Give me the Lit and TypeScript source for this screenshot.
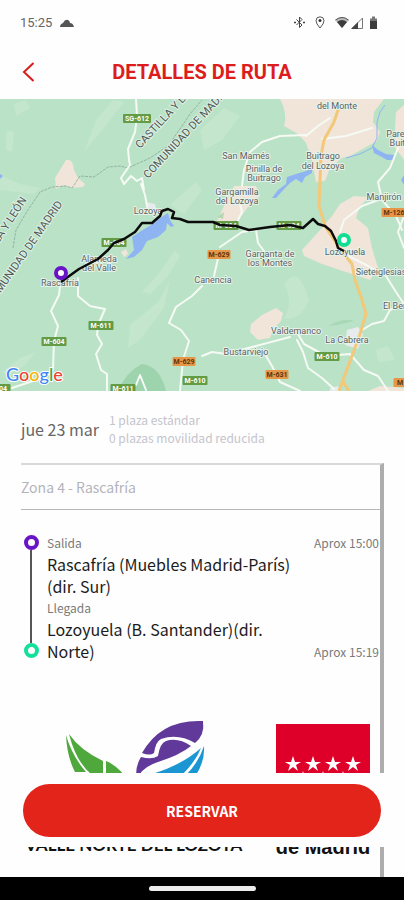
import { LitElement, html, css, svg } from "lit";
import { customElement } from "lit/decorators.js";

interface Label { x: number; y: number; text: string; }
interface Shield extends Label { kind: "green" | "orange"; w: number; }

const places: Label[] = [
  { x: 337, y: 109, text: "del Monte" },
  { x: 246, y: 159, text: "San Mamés" },
  { x: 264, y: 172, text: "Pinilla de" },
  { x: 264, y: 181, text: "Buitrago" },
  { x: 323, y: 159, text: "Buitrago" },
  { x: 323, y: 169, text: "del Lozoya" },
  { x: 237, y: 195, text: "Gargamilla" },
  { x: 237, y: 204, text: "del Lozoya" },
  { x: 384, y: 200, text: "Manjirón" },
  { x: 398, y: 137, text: "Pared" },
  { x: 399, y: 146, text: "Buitr" },
  { x: 148, y: 214, text: "Lozoya" },
  { x: 99, y: 262, text: "Alameda" },
  { x: 99, y: 271, text: "del Valle" },
  { x: 60, y: 286, text: "Rascafría" },
  { x: 270, y: 257, text: "Garganta de" },
  { x: 270, y: 266, text: "los Montes" },
  { x: 213, y: 283, text: "Canencia" },
  { x: 345, y: 255, text: "Lozoyuela" },
  { x: 381, y: 275, text: "Sieteiglesias" },
  { x: 396, y: 309, text: "El Berr" },
  { x: 296, y: 334, text: "Valdemanco" },
  { x: 347, y: 343, text: "La Cabrera" },
  { x: 246, y: 355, text: "Bustarviejo" },
];

const shields: Shield[] = [
  { x: 137, y: 118, w: 28, text: "SG-612", kind: "green" },
  { x: 114, y: 242, w: 25, text: "M-604", kind: "green" },
  { x: 226, y: 225, w: 25, text: "M-604", kind: "green" },
  { x: 289, y: 225, w: 25, text: "M-634", kind: "green" },
  { x: 101, y: 325, w: 25, text: "M-611", kind: "green" },
  { x: 54, y: 341, w: 25, text: "M-604", kind: "green" },
  { x: 3, y: 388, w: 15, text: "04", kind: "green" },
  { x: 123, y: 388, w: 25, text: "M-611", kind: "green" },
  { x: 195, y: 380, w: 25, text: "M-610", kind: "green" },
  { x: 327, y: 356, w: 25, text: "M-610", kind: "green" },
  { x: 219, y: 254, w: 23, text: "M-629", kind: "orange" },
  { x: 184, y: 361, w: 23, text: "M-629", kind: "orange" },
  { x: 277, y: 374, w: 23, text: "M-631", kind: "orange" },
  { x: 394, y: 212, w: 25, text: "M-126", kind: "orange" },
  { x: 400, y: 382, w: 13, text: "M", kind: "orange" },
];

@customElement("route-map")
class RouteMap extends LitElement {
  static styles = css`
    :host { display: block; }
    svg { display: block; width: 100%; height: auto; }
    .place { font: 9px Roboto, sans-serif; fill: #5c6262; text-anchor: middle; paint-order: stroke; stroke: #e6f3ea; stroke-width: 2px; stroke-linejoin: round; }
    .region { font: 11px Roboto, sans-serif; fill: #4f5a56; paint-order: stroke; stroke: #dff1e5; stroke-width: 2px; }
    .region.to-end { text-anchor: end; }
    .shield { font: 700 7px Roboto, sans-serif; fill: #fff; text-anchor: middle; }
    .shield.orange { fill: #5b3510; }
    .brand { font: 500 18px Lato, sans-serif; paint-order: stroke; stroke: #fff; stroke-width: 2px; }
    .road { fill: none; stroke: #f5faf4; stroke-width: 2px; stroke-linejoin: round; stroke-linecap: round; }
    .border { fill: none; stroke: #93b5a2; stroke-width: 1px; stroke-dasharray: 3 1; }
    .land { fill: #f0e5d8; }
    .shade { fill: #c3e6cd; }
    .water { fill: #8fb4f2; }
    .stream { fill: none; stroke: #8fb4f2; }
  `;

  render() {
    return html`
      <svg viewBox="0 99 404 292" role="img" aria-label="Mapa de la ruta">
        <rect x="0" y="99" width="404" height="292" fill="#bae2c7" />
        <g class="shade">
          <path d="M96 120 L113 100 L124 102 L104 128 L84 152 Z" />
          <path d="M0 175 L20 184 L40 188 L34 194 L0 190 Z" />
          <path d="M14 104 L26 100 L30 108 L16 116 Z M7 130 L14 132 L12 152 L6 150 Z" />
          <path d="M175 250 L160 272 L142 292 L150 294 L168 276 L180 256 Z" />
          <path d="M130 325 L158 302 L170 280 L164 308 L140 340 L128 348 Z" />
          <path d="M2 372 L20 358 L36 352 L24 366 L8 376 Z" />
          <path d="M284 285 Q298 262 309 300 Q300 322 284 318 Q294 300 284 285 Z" />
          <path d="M200 130 L224 108 L240 116 L222 140 L204 150 Z" />
          <path d="M376 350 L388 346 L395 360 L378 362 Z" />
          <path d="M170 205 L196 182 L202 190 L184 214 Z" />
        </g>
        <path fill="#9dd3ad" d="M118 391 Q126 372 142 364 Q160 366 166 391 Z" />
        <path fill="#a9d8b6" d="M328 326 Q344 317 354 321 L338 325 Z M268 320 L276 308 L282 313 L274 322 Z" />
        <g class="land">
          <path d="M66 160 Q73 158 74 170 L78 178 L85 184 L83 187 L70 188 L64 185 L56 189 L55 178 Z" />
          <path d="M280 99 H384 L374 112 L373 122 L380 132 L377 141 L350 156 L342 158 L330 168 L325 181 L316 182 L312 160 L306 143 L298 134 L284 126 Q288 114 280 99 Z" />
          <path d="M234 186 L256 186 L260 196 L248 207 L240 218 L230 223 L217 221 L222 210 Z" />
          <path d="M302 250 L320 230 L332 216 L340 204 L354 196 L370 197 L360 206 L356 218 L368 228 L372 248 L378 268 L370 280 L352 274 L322 264 L304 256 Z" />
          <path d="M276 308 L283 313 L281 321 L274 328 L270 338 L258 340 L250 332 L251 324 L262 315 Z" />
          <path d="M368 391 L380 386 L404 388 V391 Z M396 112 L404 105 V160 L394 146 Z" />
          <path d="M121 252 L126 249 L128 254 L124 257 Z" />
        </g>
        <path fill="#e8ebee" d="M347 330 L358 327 L363 334 L358 349 L345 345 Z M146 202 L155 204 L157 212 L146 214 Z M330 388 L338 386 L340 391 H330 Z" />
        <path fill="#b6d6b4" d="M217 217 L224 212 L223 219 Z" />
        <g class="water">
          <path d="M132 237 L141 231 L151 225 L160 218 L168 213 L170 220 L174 226 L171 227 L167 223 L166 230 L158 237 L147 241 L142 250 L134 257 L126 259 L134 250 Z" />
          <path d="M278 190 L286 184 L287 177 L296 174 L306 171 L312 168 L312 173 L305 177 L302 183 L296 179 L290 183 L285 188 L276 198 L272 198 Z" />
          <path d="M372 145 L378 150 L386 154 L394 155 L393 160 L387 160 L382 157 L374 153 Z" />
          <path d="M0 174 L3 176 L0 179 Z M404 175 L401 180 L404 185 Z" />
        </g>
        <path class="stream" d="M346 158 L360 154 L372 148 L377 138 L377 122 L380 112 L385 105" />
        <g class="border">
          <path d="M13 248 L16 230 L26 213 L40 192 L52 187 L66 186 L72 188 L80 176 L94 177 L108 167 L120 166 L128 168 L150 158 L168 146 L182 126 L190 114 L202 100" />
        </g>
        <g class="road">
          <path d="M136 99 L137 116 L135 132 L128 149 L129 160 L130 165 L121 178 L124 184 L131 176 L137 181 L142 178 L144 190 L141 184 L145 195 L147 206" />
          <path d="M60 286 L59 295 L51 311 L58 326 L54 341 L53 370 L46 376 L30 382 L12 388" />
          <path d="M78 278 L78 296 L90 306 L105 309 L98 325 L97 335 L102 344 L96 354 L101 370 L107 374 L107 391" />
          <path d="M202 286 L192 296 L176 307 L169 323 L181 330 L189 341 L183 360 L180 391" />
          <path d="M136 385 L140 375 L146 390" />
          <path d="M202 356 L212 352 L226 354 L252 347 L290 337 M298 334 L304 344 L326 356 L350 354 L364 370 L378 376 L388 391" />
          <path d="M297 340 L303 352 L308 368 L322 378 L334 389 M266 356 L272 366 L280 382 L300 391" />
          <path d="M362 330 L372 324 L384 321 L390 310 L404 304" />
          <path d="M345 254 L368 266 L386 276 L396 292 L404 304" />
          <path d="M242 186 L244 170 L250 152 L262 142 L280 136 L306 135 M306 136 L318 126 L330 118 M322 139 L346 136 L372 128" />
          <path d="M398 148 L390 168 L378 182 L382 200 L396 216 L402 230 M384 198 L362 206 L344 220 L340 232" />
          <path d="M219 254 L214 276 M220 247 L242 232 L256 230 L258 243 L264 251 M404 216 L398 232 L404 248" />
          <path d="M236 224 L242 212 L240 204" />
        </g>
        <path d="M340 104 L334 122 L324 140 L321 156 L320 180 L319 206 L325 226 L340 249 L352 264 L355 280 L362 300 L366 314 L360 334 L352 356 L343 380 L339 391 M342 380 L349 391" fill="none" stroke="#f3c878" stroke-width="3" stroke-linejoin="round" />
        ${shields.map((s) => svg`
          <rect x=${s.x - s.w / 2} y=${s.y - 4} width=${s.w} height="9" rx="1" fill=${s.kind === "green" ? "#649b45" : "#e69646"} />
          <text class="shield ${s.kind}" x=${s.x} y=${s.y + 3}>${s.text}</text>`)}
        ${places.map((p) => svg`<text class="place" x=${p.x} y=${p.y}>${p.text}</text>`)}
        <text class="region" transform="translate(140 149) rotate(-47)">CASTILLA Y LEÓN</text>
        <text class="region" transform="translate(148 179) rotate(-47)">COMUNIDAD DE MADRID</text>
        <text class="region to-end" transform="translate(27 200) rotate(-57)">CASTILLA Y LEÓN</text>
        <text class="region to-end" transform="translate(63 204) rotate(-55)">COMUNIDAD DE MADRID</text>
        <path d="M61 282 L72 274 L79 269 L98 259 L108 250 L114 243 L124 239 L135 232 L142 223 L152 223 L160 216 L162 211 L168 209 L174 212 L172 218 L180 219 L188 222 L213 222 L220 225 L236 226 L249 230 L270 227 L290 225 L303 228 L313 219 L318 224 L325 226 L331 231 L336 241 L338 248 L344 251" fill="none" stroke="#0c0c0c" stroke-width="2.500" stroke-linejoin="round" />
        <circle cx="61" cy="273" r="5" fill="#fff" stroke="#6a14c8" stroke-width="4" />
        <circle cx="344" cy="240" r="5" fill="#fff" stroke="#12dd94" stroke-width="4" />
        <text class="brand" x="6" y="381"><tspan fill="#4285f4">G</tspan><tspan fill="#ea4335">o</tspan><tspan fill="#f5b400">o</tspan><tspan fill="#4285f4">g</tspan><tspan fill="#34a853">l</tspan><tspan fill="#ea4335">e</tspan></text>
      </svg>
    `;
  }
}

@customElement("app-root")
class AppRoot extends LitElement {
  static styles = css`
    * { box-sizing: border-box; }
    :host {
      display: flex; flex-direction: column; min-height: 100vh; background: #fefefe; color: #1c1c1c;
      font-family: "Noto Sans CJK SC", "Noto Sans", sans-serif;
    }
    .status { display: flex; align-items: center; height: 45px; padding: 0 26px 0 20px; font: 13px/16px Roboto, sans-serif; color: #666; }
    .status .cloud { margin-left: 8px; }
    .status .right { display: flex; align-items: center; margin-left: auto; }
    .status .right svg { display: block; }
    .bt, .pin { margin-right: 10px; }
    .header { display: grid; grid-template-columns: 56px 1fr 56px; align-items: center; height: 54px; }
    .back { height: 44px; margin: 0; padding: 0 0 0 22px; border: 0; background: none; }
    .back svg { display: block; }
    h1 { margin: 0; font: 700 20px/24px Roboto, sans-serif; color: #dd1c1c; text-align: center; }
    main { flex: 1; display: flex; flex-direction: column; position: relative; overflow: hidden; }
    .summary { display: flex; align-items: center; gap: 10px; height: 72px; padding: 3px 21px 0; }
    .date { font-size: 16px; line-height: 24px; color: #666; }
    .seats { font-size: 12px; line-height: 18px; color: #c4c4cc; }
    .card { flex: 1; display: flex; flex-direction: column; margin: 0 20px 0 21px; border-top: 2px solid #d9d9d9; border-right: 4px solid #adadad; }
    .zone { margin: 0; height: 45px; border-bottom: 1px solid #b4b6ba; font-size: 14px; font-weight: 400; line-height: 44px; color: #b4b4bc; }
    .trip { display: grid; grid-template-columns: 20px 1fr auto; column-gap: 6px; padding: 22px 1px 0 0; }
    .rail { display: flex; flex-direction: column; align-items: center; padding: 3px 0 4px; }
    .ring { width: 15px; height: 15px; border: 4px solid #6a14c8; border-radius: 50%; }
    .ring.end { border-color: #14e09a; }
    .line { flex: 1; width: 2px; background: #555; }
    .stops, .times { font-size: 12px; line-height: 21px; color: #7a7a7a; }
    .stops p { margin: 0; }
    .stops .stop { font-size: 16px; line-height: 22px; color: #1c1c1c; }
    .times { display: flex; flex-direction: column; justify-content: space-between; padding-left: 6px; }
    .logos { display: flex; justify-content: space-between; align-items: flex-start; margin-top: 57px; padding: 0 9px 0 4px; color: #111; }
    .logo { display: flex; flex-direction: column; align-items: center; margin: 0; }
    .logo svg { display: block; }
    .valle { font: 700 17px/20px Lato, sans-serif; }
    .madrid { font: 700 20px/20px "Liberation Sans", sans-serif; }
    .action { position: absolute; left: 0; right: 0; bottom: 30px; padding: 11px 23px 10px; background: #fefefe; }
    .reserve { display: block; width: 100%; height: 53px; padding: 0; border: 0; border-radius: 27px; background: #e3241b; color: #fff; font: 700 14px/20px "Noto Sans CJK SC", sans-serif; }
    .nav { display: flex; justify-content: center; height: 23px; padding-top: 9px; background: #000; }
    .handle { width: 107px; height: 5px; border-radius: 3px; background: #ececec; }
  `;

  render() {
    return html`
      <div class="status">
        <span>15:25</span>
        <svg class="cloud" width="14" height="10" viewBox="0 0 14 10"><path d="M0 9 Q0 6 3 5 Q5 1 8 2 Q10 3 10 5 Q13 5 14 9 Z" fill="#555" /></svg>
        <div class="right">
          <svg class="bt" width="11" height="13" viewBox="0 0 11 13" fill="none" stroke="#444" stroke-width="1"><path d="M2.5 3.5 L8 9 L5.5 11.5 V1 L8 3.5 L2.5 9" /><path d="M0 6.5 H2 M9 6.5 H11" stroke-width="1.5" /></svg>
          <svg class="pin" width="10" height="13" viewBox="0 0 10 13"><path d="M5 12 Q1 7.500 1 4.800 A4 4 0 0 1 9 4.800 Q9 7.500 5 12 Z" fill="none" stroke="#555" /><circle cx="5" cy="4.500" r="1.500" fill="#333" /></svg>
          <svg width="14" height="11" viewBox="0 0 14 11"><path d="M7 11 L0 3 Q7 -3 14 3 Z" fill="#bbb" /><path d="M7 11 L2 5 Q7 1 12 5 Z" fill="#3c3c3c" /><path d="M.5 3 Q7 -2 13.500 3" fill="none" stroke="#555" /></svg>
          <svg width="20" height="12" viewBox="0 0 20 12"><path d="M3 11.500 L13.500 1 V11.500 Z" fill="none" stroke="#777" /><path d="M2 12 L9 5 V12 Z" fill="#444" /></svg>
          <svg width="9" height="13" viewBox="0 0 9 13"><path d="M1 2.500 H3 V.5 H6 V2.500 H8 V12.500 H1 Z" fill="#777" /><rect x="1" y="5" width="7" height="8" fill="#3c3c3c" /></svg>
        </div>
      </div>
      <header class="header">
        <button class="back" aria-label="Volver">
          <svg width="13" height="20" viewBox="0 0 13 20" fill="none" stroke="#dd1c1c" stroke-width="2"><path d="M11.500 1 L2 10 L11.500 19" /></svg>
        </button>
        <h1>DETALLES DE RUTA</h1>
      </header>
      <main>
        <route-map></route-map>
        <section class="summary">
          <div class="date">jue 23 mar</div>
          <div class="seats"><div>1 plaza estándar</div><div>0 plazas movilidad reducida</div></div>
        </section>
        <section class="card">
          <h2 class="zone">Zona 4 - Rascafría</h2>
          <div class="trip">
            <div class="rail"><span class="ring"></span><span class="line"></span><span class="ring end"></span></div>
            <div class="stops">
              <p>Salida</p>
              <p class="stop">Rascafría (Muebles Madrid-París)<wbr>(dir. Sur)</p>
              <p>Llegada</p>
              <p class="stop">Lozoyuela (B. Santander)(dir. Norte)</p>
            </div>
            <div class="times"><span>Aprox 15:00</span><span>Aprox 15:19</span></div>
          </div>
          <div class="logos">
            <figure class="logo">
              <svg width="144" height="116" viewBox="0 0 144 116">
                <path d="M4 16 Q5 38 13 53 H24 Q10 37 4 16 Z" fill="#4fa83c" />
                <path d="M7 15 Q18 31 41 42 V56 H30 Q14 43 7 15 Z M44 42 Q54 46 62 56 H44 Z" fill="#4fa83c" />
                <path d="M141 2 Q143 16 133 24 Q116 14 99 20 Q94 22 92 34 Q88 37 80 34 Q99 0 141 2 Z" fill="#60399a" />
                <path d="M79 38 Q90 41 96 37 Q98 24 104 22 Q116 18 129 27 Q118 36 96 43 Q83 47 77 56 H74 Q74 46 79 38 Z" fill="#60399a" />
                <path d="M90 55 Q120 46 139 29 Q134 42 120 56 H90 Z M142 27 Q143 42 134 56 H124 Q137 43 142 27 Z" fill="#1b96d3" />
              </svg>
              <figcaption class="valle">VALLE NORTE DEL LOZOYA</figcaption>
            </figure>
            <figure class="logo">
              <svg width="96" height="118" viewBox="0 0 96 118">
                <rect x="1" y="5" width="94" height="60" fill="#df0029" />
                ${[18, 38, 58, 78].map((x) => svg`<path transform="translate(${x} 45)" d="M0 -8 L2 -2 H8 L3 1 L5 7 L0 3 L-5 7 L-3 1 L-8 -2 H-2 Z" fill="#fff" />`)}
                ${[28, 48, 68].map((x) => svg`<path transform="translate(${x} 60)" d="M0 -8 L2 -2 H8 L3 1 L5 7 L0 3 L-5 7 L-3 1 L-8 -2 H-2 Z" fill="#fff" />`)}
              </svg>
              <figcaption class="madrid">de Madrid</figcaption>
            </figure>
          </div>
        </section>
        <div class="action"><button class="reserve">RESERVAR</button></div>
      </main>
      <div class="nav"><span class="handle"></span></div>
    `;
  }
}
